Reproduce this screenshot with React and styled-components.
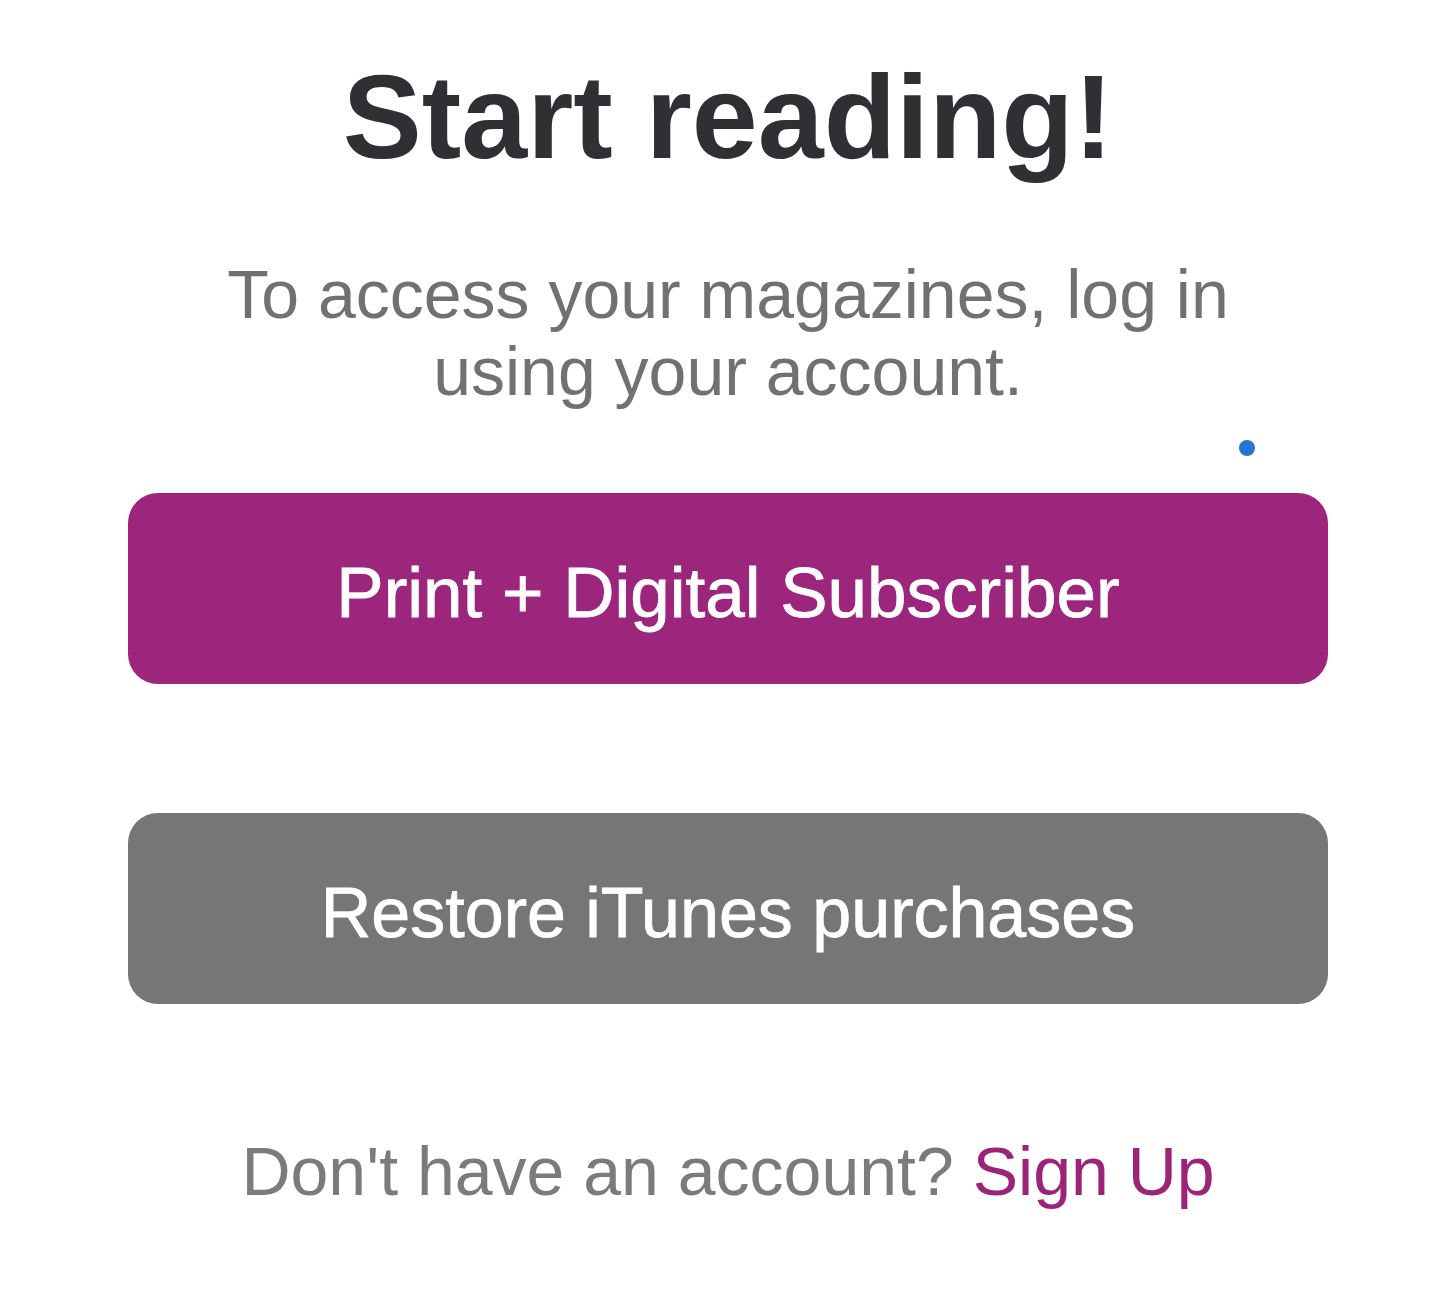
import styled, { createGlobalStyle } from "styled-components";

const GlobalStyle = createGlobalStyle`
  body {
    margin: 0;
    background: #ffffff;
    font-family: "Liberation Sans", Arial, sans-serif;
  }
`;

const Page = styled.div`
  position: relative;
  width: 1452px;
  min-height: 1308px;
  padding: 58px 124px 0 128px;
  box-sizing: border-box;
  display: flex;
  flex-direction: column;
  align-items: stretch;
`;

const Title = styled.h1`
  margin: 0;
  font-size: 118.5px;
  line-height: 118px;
  font-weight: 700;
  color: #2f3033;
  text-align: center;
`;

const Subtitle = styled.p`
  margin: 80px 0 0;
  font-size: 68px;
  line-height: 77px;
  color: #717175;
  text-align: center;
`;

const Dot = styled.span`
  position: absolute;
  top: 440px;
  left: 1239px;
  width: 16px;
  height: 16px;
  border-radius: 50%;
  background: #2775cc;
`;

const Button = styled.button`
  display: flex;
  align-items: center;
  justify-content: center;
  width: 100%;
  height: 191px;
  margin-top: ${(p) => p.$gap}px;
  padding: 8px 0 0;
  border: none;
  border-radius: 30px;
  background: ${(p) => p.$bg};
  color: #ffffff;
  font-family: "Liberation Sans", Arial, sans-serif;
  font-size: ${(p) => p.$size}px;
  -webkit-text-stroke: 0.8px #ffffff;
  cursor: pointer;
`;

const Footer = styled.p`
  margin: 127px 0 0;
  font-size: 68px;
  line-height: 80px;
  color: #7b7b7d;
  text-align: center;

  a {
    color: #9b2479;
    text-decoration: none;
  }
`;

const App = () => {
  return (
    <>
      <GlobalStyle />
      <Page>
        <Title>Start reading!</Title>
        <Subtitle>
          To access your magazines, log in
          <br />
          using your account.
        </Subtitle>
        <Dot />
        <Button $bg="#9c267c" $gap={83} $size={71}>
          Print + Digital Subscriber
        </Button>
        <Button $bg="#767679" $gap={129} $size={70}>
          Restore iTunes purchases
        </Button>
        <Footer>
          Don't have an account? <a href="#">Sign Up</a>
        </Footer>
      </Page>
    </>
  );
};

export default App;
